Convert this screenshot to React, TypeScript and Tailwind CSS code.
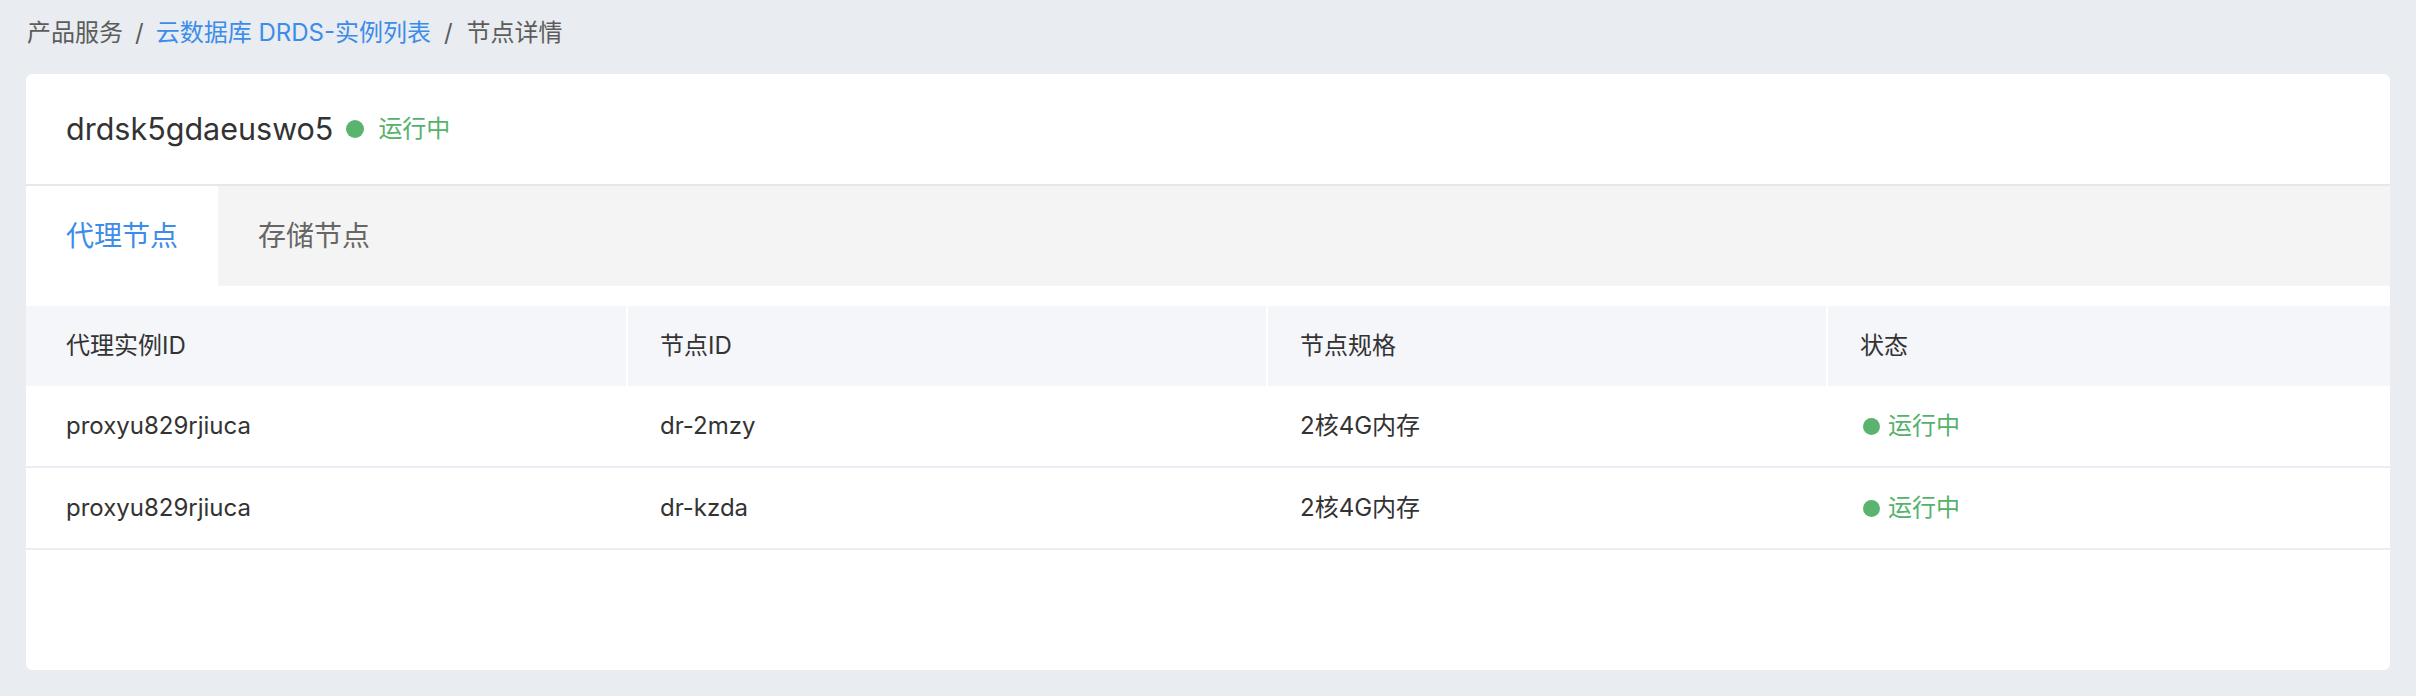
// App.tsx — DRDS 节点详情

const rows = [
  { id: "proxyu829rjiuca", node: "dr-2mzy", spec: "2核4G内存", status: "运行中" },
  { id: "proxyu829rjiuca", node: "dr-kzda", spec: "2核4G内存", status: "运行中" },
];

const font = { fontFamily: "Inter, 'Noto Sans CJK SC', sans-serif" };

function StatusDot({ size = "w-[18px] h-[18px]" }: { size?: string }) {
  return <span className={`inline-block rounded-full bg-[#5ab46e] ${size}`} />;
}

export default function App() {
  return (
    <div className="min-h-screen w-full bg-[#e9ecf0] text-[#333]" style={font}>
      {/* breadcrumb */}
      <div className="h-[74px] pt-[17px] px-[27px] flex items-start text-[24px] leading-[32px]">
        <span className="text-[#5c5c5c]">产品服务</span>
        <span className="mx-[12px] text-[#5c5c5c]">/</span>
        <a href="#" className="text-[#3c8cea]">
          云数据库 DRDS-实例列表
        </a>
        <span className="ml-[13px] mr-[14px] text-[#5c5c5c]">/</span>
        <span className="text-[#5c5c5c]">节点详情</span>
      </div>

      <div className="mx-[26px] bg-white rounded-[6px] overflow-hidden pb-[120px]">
        {/* title */}
        <div className="h-[112px] border-b-2 border-[#e4e7eb] pl-[40px] flex items-center">
          <h1 className="text-[30.5px] font-normal text-[#333]">drdsk5gdaeuswo5</h1>
          <span className="ml-[13px] mr-[14px] flex items-center">
            <StatusDot />
          </span>
          <span className="text-[24px] text-[#55b26b]">运行中</span>
        </div>

        {/* tabs */}
        <div className="h-[100px] bg-[#f4f4f4] flex">
          <button className="h-full px-[40px] bg-white text-[28px] text-[#3c8cea]">代理节点</button>
          <button className="h-full px-[40px] text-[28px] text-[#666]">存储节点</button>
        </div>

        {/* table */}
        <div className="mt-[20px] text-[24px]">
          <div className="grid grid-cols-[600px_640px_560px_1fr] h-[80px] bg-[#f5f6fa] text-[#333]">
            <div className="pl-[40px] flex items-center">代理实例ID</div>
            <div className="pl-[32px] border-l-2 border-white flex items-center">节点ID</div>
            <div className="pl-[32px] border-l-2 border-white flex items-center">节点规格</div>
            <div className="pl-[32px] border-l-2 border-white flex items-center">状态</div>
          </div>
          {rows.map((r, i) => (
            <div
              key={i}
              className="grid grid-cols-[600px_640px_560px_1fr] h-[82px] border-b-2 border-[#e9eef5] text-[#333]"
            >
              <div className="pl-[40px] flex items-center">{r.id}</div>
              <div className="pl-[34px] flex items-center">{r.node}</div>
              <div className="pl-[34px] flex items-center">{r.spec}</div>
              <div className="pl-[37px] flex items-center gap-[8px]">
                <StatusDot size="w-[17px] h-[17px]" />
                <span className="text-[#55b26b]">{r.status}</span>
              </div>
            </div>
          ))}
        </div>
      </div>
    </div>
  );
}
